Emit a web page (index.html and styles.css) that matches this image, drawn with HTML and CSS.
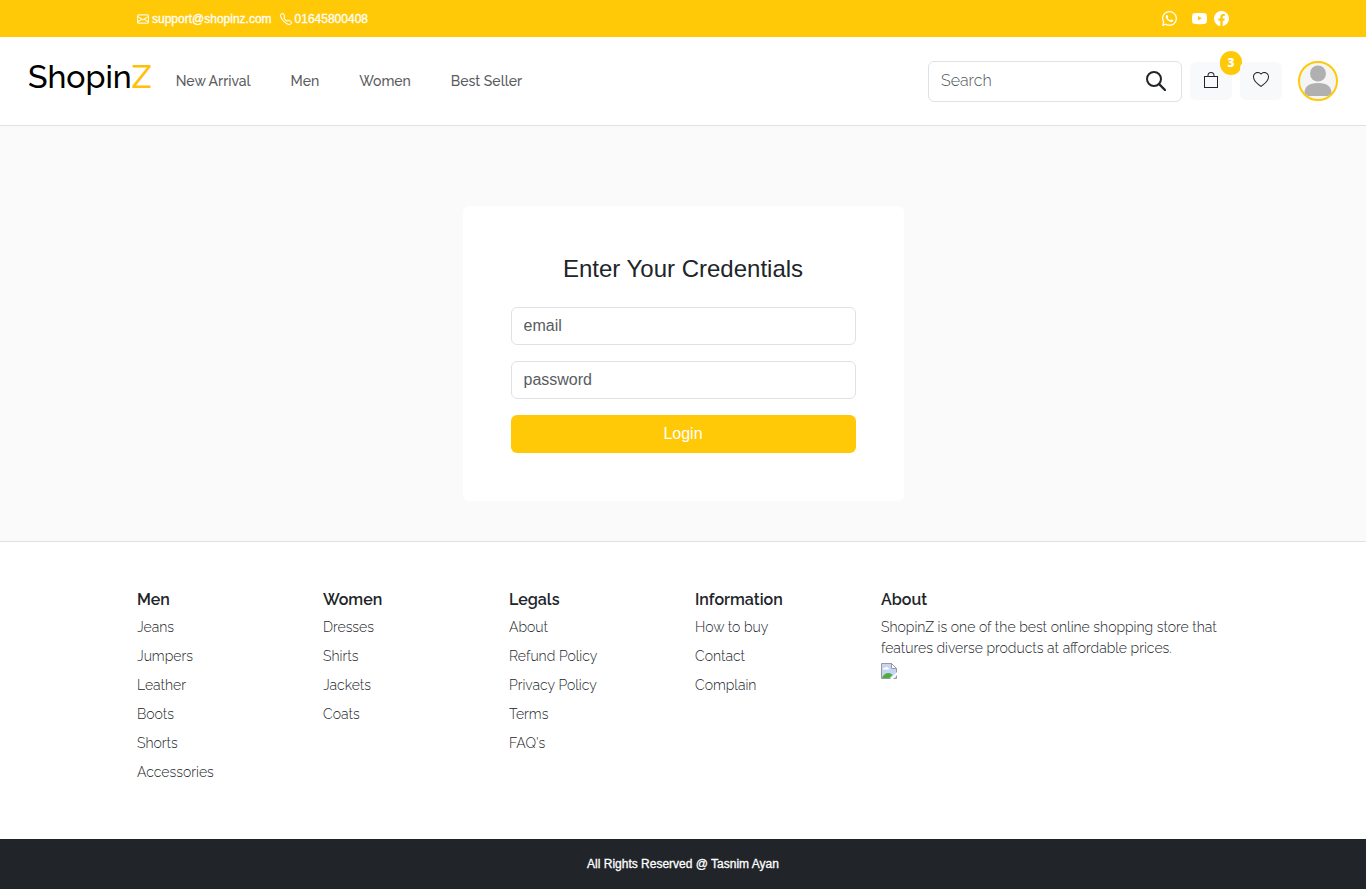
FILE: index.html
```html
<!DOCTYPE html>
<html lang="en">
<head>
<meta charset="utf-8">
<meta name="viewport" content="width=device-width, initial-scale=1">
<title>ShopinZ - Login</title>
<link rel="stylesheet" href="styles.css">
</head>
<body>
<div class="topbar">
  <div class="topbar-inner">
    <div class="contacts">
      <a class="contact" href="mailto:support@shopinz.com"><svg class="icon-sm" viewBox="0 0 16 16" aria-hidden="true"><path d="M0 4a2 2 0 0 1 2-2h12a2 2 0 0 1 2 2v8a2 2 0 0 1-2 2H2a2 2 0 0 1-2-2V4Zm2-1a1 1 0 0 0-1 1v.217l7 4.2 7-4.2V4a1 1 0 0 0-1-1H2Zm13 2.383-4.708 2.825L15 11.105V5.383Zm-.034 6.876-5.64-3.471L8 9.583l-1.326-.795-5.64 3.47A1 1 0 0 0 2 13h12a1 1 0 0 0 .966-.741ZM1 11.105l4.708-2.897L1 5.383v5.722Z"/></svg>support@shopinz.com</a>
      <a class="contact" href="tel:01645800408"><svg class="icon-sm" viewBox="0 0 16 16" aria-hidden="true"><path d="M3.654 1.328a.678.678 0 0 0-1.015-.063L1.605 2.3c-.483.484-.661 1.169-.45 1.77a17.568 17.568 0 0 0 4.168 6.608 17.569 17.569 0 0 0 6.608 4.168c.601.211 1.286.033 1.77-.45l1.034-1.034a.678.678 0 0 0-.063-1.015l-2.307-1.794a.678.678 0 0 0-.58-.122l-2.19.547a1.745 1.745 0 0 1-1.657-.459L5.482 8.062a1.745 1.745 0 0 1-.46-1.657l.548-2.19a.678.678 0 0 0-.122-.58L3.654 1.328ZM1.884.511a1.745 1.745 0 0 1 2.612.163L6.29 2.98c.329.423.445.974.315 1.494l-.547 2.19a.678.678 0 0 0 .178.643l2.457 2.457a.678.678 0 0 0 .644.178l2.189-.547a1.745 1.745 0 0 1 1.494.315l2.306 1.794c.829.645.905 1.87.163 2.611l-1.034 1.034c-.74.74-1.846 1.065-2.877.702a18.634 18.634 0 0 1-7.01-4.42 18.634 18.634 0 0 1-4.42-7.009c-.362-1.03-.037-2.137.703-2.877L1.885.511Z"/></svg>01645800408</a>
    </div>
    <div class="socials">
      <a class="social social-first" href="#" aria-label="WhatsApp"><svg class="icon-md" viewBox="0 0 16 16"><path d="M13.601 2.326A7.854 7.854 0 0 0 7.994 0C3.627 0 .068 3.558.064 7.926c0 1.399.366 2.76 1.057 3.965L0 16l4.204-1.102a7.933 7.933 0 0 0 3.79.965h.004c4.368 0 7.926-3.558 7.93-7.93A7.898 7.898 0 0 0 13.6 2.326zM7.994 14.521a6.573 6.573 0 0 1-3.356-.92l-.24-.144-2.494.654.666-2.433-.156-.251a6.56 6.56 0 0 1-1.007-3.505c0-3.626 2.957-6.584 6.591-6.584a6.56 6.56 0 0 1 4.66 1.931 6.557 6.557 0 0 1 1.928 4.66c-.004 3.639-2.961 6.592-6.592 6.592zm3.615-4.934c-.197-.099-1.17-.578-1.353-.646-.182-.065-.315-.099-.445.099-.133.197-.513.646-.627.775-.114.133-.232.148-.43.05-.197-.1-.836-.308-1.592-.985-.59-.525-.985-1.175-1.103-1.372-.114-.198-.011-.304.088-.403.087-.088.197-.232.296-.346.1-.114.133-.198.198-.33.065-.134.034-.248-.015-.347-.05-.099-.445-1.076-.612-1.47-.16-.389-.323-.335-.445-.34-.114-.007-.247-.007-.38-.007a.729.729 0 0 0-.529.247c-.182.198-.691.677-.691 1.654 0 .977.71 1.916.81 2.049.098.133 1.394 2.132 3.383 2.992.47.205.84.326 1.129.418.475.152.904.129 1.246.08.38-.058 1.171-.48 1.338-.943.164-.464.164-.86.114-.943-.049-.084-.182-.133-.38-.232z"/></svg></a>
      <a class="social" href="#" aria-label="YouTube"><svg class="icon-md" viewBox="0 0 16 16"><path fill-rule="evenodd" d="M8.051 2c2.4 0 4.8.08 6.1.43a2 2 0 0 1 1.416 1.41C15.92 5.1 16 6.8 16 8s-.08 2.9-.433 4.16a2 2 0 0 1-1.416 1.41C12.8 13.9 10.4 14 8 14s-4.8-.1-6.151-.43A2 2 0 0 1 .433 12.16C.08 10.9 0 9.2 0 8s.08-2.9.433-4.16A2 2 0 0 1 1.849 2.43C3.2 2.08 5.6 2 8.051 2zM6.4 5.209v4.818l4.157-2.408z"/></svg></a>
      <a class="social" href="#" aria-label="Facebook"><svg class="icon-md" viewBox="0 0 16 16"><path d="M16 8.049c0-4.446-3.582-8.05-8-8.05C3.58 0-.002 3.603-.002 8.05c0 4.017 2.926 7.347 6.75 7.951v-5.625h-2.03V8.05H6.75V6.275c0-2.017 1.195-3.131 3.022-3.131.876 0 1.791.157 1.791.157v1.98h-1.009c-.993 0-1.303.621-1.303 1.258v1.51h2.218l-.354 2.326H9.25V16c3.824-.604 6.75-3.934 6.75-7.951z"/></svg></a>
    </div>
  </div>
</div>

<header class="navbar">
  <a class="logo" href="#">Shopin<span class="logo-accent">Z</span></a>
  <nav class="menu">
    <a class="menu-link" href="#">New Arrival</a>
    <a class="menu-link" href="#">Men</a>
    <a class="menu-link" href="#">Women</a>
    <a class="menu-link" href="#">Best Seller</a>
  </nav>
  <div class="tools">
    <form class="search">
      <input class="search-input" type="search" placeholder="Search" aria-label="Search">
      <button class="search-button" type="submit" aria-label="Submit search"><svg class="icon-search" viewBox="0 0 20 20"><circle cx="8" cy="8" r="7" fill="none" stroke="currentColor" stroke-width="2"/><path d="M13 13l6 6" fill="none" stroke="currentColor" stroke-width="2.4" stroke-linecap="round"/></svg></button>
    </form>
    <button class="tool-button" type="button" aria-label="Cart">
      <svg class="icon-tool" viewBox="0 0 16 16"><path d="M8 1a2.5 2.5 0 0 1 2.5 2.5V4h-5v-.5A2.5 2.5 0 0 1 8 1zm3.500 3v-.5a3.500 3.500 0 1 0-7 0V4H1v12h14V4h-3.500zM2 5h12v10H2V5z" fill-rule="evenodd"/></svg>
      <span class="badge">3</span>
    </button>
    <button class="tool-button" type="button" aria-label="Wishlist">
      <svg class="icon-tool" viewBox="0 0 16 16"><path d="m8 2.748-.717-.737C5.6.281 2.514.878 1.4 3.053c-.523 1.023-.641 2.5.314 4.385.92 1.815 2.834 3.989 6.286 6.357 3.452-2.368 5.365-4.542 6.286-6.357.955-1.886.838-3.362.314-4.385C13.486.878 10.4.28 8.717 2.01L8 2.748zM8 15C-7.333 4.868 3.279-3.04 7.824 1.143c.06.055.119.112.176.171a3.12 3.12 0 0 1 .176-.17C12.72-3.042 23.333 4.867 8 15z"/></svg>
    </button>
    <a class="avatar" href="#" aria-label="Account"><svg class="avatar-image" viewBox="0 0 36 36"><circle cx="18" cy="10.5" r="8" fill="#b0b0b0"/><path d="M4.5 33v-3c0-6 4-10 13.5-10s13.5 4 13.5 10v3z" fill="#b0b0b0"/></svg></a>
  </div>
</header>

<main class="page">
  <form class="card">
    <h1 class="card-title">Enter Your Credentials</h1>
    <input class="field" type="email" placeholder="email" aria-label="email">
    <input class="field" type="password" placeholder="password" aria-label="password">
    <button class="login" type="submit">Login</button>
  </form>
</main>

<footer class="footer">
  <div class="footer-grid">
    <section class="column">
      <h2 class="column-title">Men</h2>
      <ul class="links"><li><a href="#">Jeans</a></li><li><a href="#">Jumpers</a></li><li><a href="#">Leather</a></li><li><a href="#">Boots</a></li><li><a href="#">Shorts</a></li><li><a href="#">Accessories</a></li></ul>
    </section>
    <section class="column">
      <h2 class="column-title">Women</h2>
      <ul class="links"><li><a href="#">Dresses</a></li><li><a href="#">Shirts</a></li><li><a href="#">Jackets</a></li><li><a href="#">Coats</a></li></ul>
    </section>
    <section class="column">
      <h2 class="column-title">Legals</h2>
      <ul class="links"><li><a href="#">About</a></li><li><a href="#">Refund Policy</a></li><li><a href="#">Privacy Policy</a></li><li><a href="#">Terms</a></li><li><a href="#">FAQ's</a></li></ul>
    </section>
    <section class="column">
      <h2 class="column-title">Information</h2>
      <ul class="links"><li><a href="#">How to buy</a></li><li><a href="#">Contact</a></li><li><a href="#">Complain</a></li></ul>
    </section>
    <section class="column column-wide">
      <h2 class="column-title">About</h2>
      <p class="about">ShopinZ is one of the best online shopping store that features diverse products at affordable prices.</p>
      <svg class="missing-image" viewBox="0 0 16 16" aria-hidden="true"><path d="M.5.5h10l5 5v10H.5z" fill="#c4d5f5"/><path d="M2 6c0-1 1-1.500 2-1 .5-1.500 3-1.500 3 0 1 0 1.500 1 1 1.500H2z" fill="#fff"/><path d="M1 15c1-3 3.500-5 6.500-5 2 0 3 1 4 2l-3 3z" fill="#52ac3c"/><path d="M.5 15.500V.5h10l5 5v10z" fill="none" stroke="#9a9a9a"/><path d="M10.500.5v5h5z" fill="#fff" stroke="#9a9a9a"/><path d="M9 16l7-7v3l-4 4z" fill="#fff"/></svg>
    </section>
  </div>
</footer>
<div class="copyright">All Rights Reserved @ Tasnim Ayan</div>
</body>
</html>
```

FILE: styles.css
```css
*, *::before, *::after { box-sizing: border-box; }

body {
  margin: 0;
  display: flex;
  flex-direction: column;
  min-height: 100vh;
  font-family: Raleway, Lato, sans-serif;
  font-size: 16px;
  line-height: 24px;
  color: #212529;
  background: #fff;
}

a { color: inherit; text-decoration: none; }
svg { fill: currentColor; flex-shrink: 0; display: block; }
button, input { font: inherit; color: inherit; }
button { cursor: pointer; }
h1, h2, p, ul { margin: 0; padding: 0; }

.topbar {
  background: #ffc908;
  color: #fff;
  font: 500 12px/18px "Liberation Sans", Arial, sans-serif;
}
.topbar-inner {
  max-width: 1140px;
  min-height: 37px;
  margin: 0 auto;
  padding: 0 24px;
  display: flex;
  align-items: center;
  justify-content: space-between;
}
.contacts { display: flex; gap: 8px; }
.contact { display: flex; align-items: center; gap: 3px; -webkit-text-stroke: 0.3px currentColor; }
.icon-sm { width: 12px; height: 12px; stroke: currentColor; stroke-width: 0.4px; }
.socials { display: flex; gap: 7px; }
.social-first { margin-right: 8px; }
.icon-md { width: 15px; height: 15px; }

.navbar {
  display: flex;
  align-items: center;
  min-height: 89px;
  padding: 0 28px;
  border-bottom: 1px solid #dee2e6;
}
.logo { font-size: 32px; font-weight: 500; line-height: 40px; color: #000; padding-bottom: 8px; }
.logo-accent { color: #ffc107; }
.menu { display: flex; gap: 40px; margin-left: 24px; }
.menu-link { font-size: 14px; font-weight: 500; line-height: 24px; color: #5a5c5e; }
.tools { display: flex; align-items: center; gap: 8px; margin-left: auto; }
.search {
  display: flex;
  align-items: center;
  width: 254px;
  height: 41px;
  border: 1px solid #dee2e6;
  border-radius: 6px;
}
.search-input {
  flex: 1;
  min-width: 0;
  padding: 6px 12px;
  border: 0;
  outline: 0;
  background: none;
  font-weight: 300;
}
.search-input::placeholder { color: #4d5358; opacity: 1; }
.search-button { padding: 0 15px; border: 0; background: none; }
.icon-search { width: 20px; height: 20px; }
.tool-button {
  position: relative;
  display: flex;
  align-items: center;
  justify-content: center;
  width: 42px;
  height: 38px;
  padding: 0 0 2px;
  border: 0;
  border-radius: 6px;
  background: #f8f9fa;
}
.icon-tool { width: 16px; height: 16px; }
.badge {
  position: absolute;
  top: -11px;
  right: -10px;
  width: 22px;
  height: 24px;
  border-radius: 12px;
  background: #ffc908;
  color: #fff;
  font: 800 12px/24px "Open Sans", sans-serif;
  text-align: center;
}
.avatar {
  width: 40px;
  height: 40px;
  margin-left: 8px;
  border: 2px solid #ffc908;
  border-radius: 50%;
  background: #f5f5f5;
  overflow: hidden;
}
.avatar-image { width: 36px; height: 36px; }

.page {
  flex: 1;
  padding: 80px 24px 40px;
  background: #fafafa;
  font-family: "Liberation Sans", Arial, sans-serif;
}
.card {
  display: flex;
  flex-direction: column;
  gap: 16px;
  max-width: 441px;
  margin: 0 auto;
  padding: 48px;
  border-radius: 6px;
  background: #fff;
}
.card-title { margin-bottom: 8px; font-size: 24px; font-weight: 500; line-height: 29px; text-align: center; }
.field {
  width: 100%;
  height: 38px;
  padding: 6px 12px;
  border: 1px solid #dee2e6;
  border-radius: 6px;
  background: #fff;
}
.field::placeholder { color: #595c5f; opacity: 1; }
.login { height: 38px; border: 0; border-radius: 6px; background: #ffc908; color: #fff; }

.footer { border-top: 1px solid #dee2e6; padding: 48px 0 56px; }
.footer-grid {
  display: grid;
  grid-template-columns: repeat(6, 1fr);
  max-width: 1140px;
  margin: 0 auto;
  padding: 0 12px;
}
.column { padding: 0 12px; }
.column-wide { grid-column: span 2; }
.column-title { margin-bottom: 8px; font-size: 16px; font-weight: 600; line-height: 19px; }
.links { display: grid; gap: 8px; list-style: none; font-size: 14px; line-height: 21px; }
.links, .about { font-weight: 300; }
.about { font-size: 14px; line-height: 21px; }
.missing-image { width: 16px; height: 16px; margin-top: 4px; }

.copyright {
  padding: 16px;
  background: #212529;
  color: #fff;
  font: 500 12px/18px "Liberation Sans", Arial, sans-serif;
  text-align: center;
  -webkit-text-stroke: 0.3px currentColor;
}
```
